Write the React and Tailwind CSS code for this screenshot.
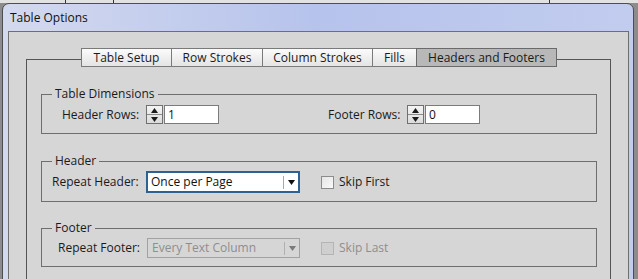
import React from 'react';

const font = { fontFamily: '"Open Sans", "Noto Sans", sans-serif' };

const tabs = [
  { label: 'Table Setup', w: 'w-[91px]' },
  { label: 'Row Strokes', w: 'w-[92px]' },
  { label: 'Column Strokes', w: 'w-[111px]' },
  { label: 'Fills', w: 'w-[45px]' },
  { label: 'Headers and Footers', w: 'w-[141px]', active: true },
];

const Spinner = () => (
  <div className="w-[17px] h-[19px] border border-[#707070] bg-gradient-to-b from-[#f4f4f4] to-[#dcdcdc] flex flex-col">
    <div className="flex-1 flex items-center justify-center border-b border-[#8a8a8a]">
      <svg width="7" height="5" viewBox="0 0 7 5"><path d="M0 5 L3.5 0 L7 5 Z" fill="#1a1a1a" /></svg>
    </div>
    <div className="flex-1 flex items-center justify-center">
      <svg width="7" height="5" viewBox="0 0 7 5"><path d="M0 0 L7 0 L3.5 5 Z" fill="#1a1a1a" /></svg>
    </div>
  </div>
);

const NumberField = ({ value }) => (
  <div className="flex items-center">
    <Spinner />
    <div className="ml-[1px] w-[55px] h-[19px] border border-[#7b7b7b] bg-white pl-[3px] flex items-center text-[12px] text-[#111]">
      {value}
    </div>
  </div>
);

const Dropdown = ({ value, disabled }) => (
  <div
    className={
      disabled
        ? 'w-[153px] h-[20px] border border-[#a2a2a2] bg-[#d6d6d6] flex items-center pl-[4px] text-[12px] text-[#8e8e8e]'
        : 'w-[154px] h-[22px] border-2 border-[#2f6190] bg-white flex items-center pl-[3px] text-[12px] text-[#111]'
    }
  >
    <span className="flex-1">{value}</span>
    <div className={disabled ? 'w-px h-[13px] bg-[#b0b0b0]' : 'w-px h-[13px] bg-[#a8a8a8]'} />
    <div className="w-[14px] flex items-center justify-center">
      <svg width="7" height="5" viewBox="0 0 7 5">
        <path d="M0 0 L7 0 L3.5 5 Z" fill={disabled ? '#7a7a7a' : '#111'} />
      </svg>
    </div>
  </div>
);

const Checkbox = ({ label, disabled }) => (
  <div className="flex items-center ml-[21px]">
    <div
      className={
        disabled
          ? 'w-[13px] h-[13px] border border-[#b4b4b4] bg-[#cfcfcf]'
          : 'w-[13px] h-[13px] border border-[#8c8c8c] bg-gradient-to-br from-[#e6e6e6] to-[#fafafa]'
      }
    />
    <span className={disabled ? 'ml-[5px] text-[12px] text-[#8e8e8e]' : 'ml-[5px] text-[12px] text-[#1a1a1a]'}>
      {label}
    </span>
  </div>
);

const Group = ({ title, className, children }) => (
  <fieldset className={`ml-[14px] mr-[13px] border border-[#6e6e6e] ${className}`}>
    <legend className="ml-[10px] px-[3px] leading-[16px] text-[12px] text-[#1a1a1a]">{title}</legend>
    {children}
  </fieldset>
);

export default function App() {
  return (
    <div className="w-[638px] h-[279px] overflow-hidden bg-[#8c8c8c] text-[#1a1a1a]" style={font}>
      <div className="h-[3px] bg-[#e2e2e2] flex">
        <div className="ml-[65px] w-px bg-[#333]" />
        <div className="ml-[47px] w-px bg-[#333]" />
        <div className="ml-[435px] w-px bg-[#333]" />
      </div>

      {/* window */}
      <div className="ml-[2px] w-[632px] border border-[#4e4e4e] rounded-t-[7px] bg-gradient-to-r from-[#d3d9ee] via-[#b6c3ec] to-[#c2ccef] pl-[5px] pr-[4px]">
        <div className="h-[27px] flex items-center pl-[2px] text-[12px] text-[#111]">Table Options</div>

        <div className="h-[260px] border border-[#6f6f6f] bg-[#d6d6d6] pt-[16px] px-[17px]">
          <fieldset className="border-t border-x border-[#555] h-[300px]">
            <legend className="ml-[54px] pb-[4px]">
              <div className="flex">
                {tabs.map((t, i) => (
                  <div
                    key={t.label}
                    className={
                      (i > 0 ? '-ml-px ' : '') +
                      t.w +
                      (t.active
                        ? ' h-[19px] border border-[#6a6a6a] bg-[#b8b8b8] flex items-center justify-center text-[12px] text-[#1a1a1a]'
                        : ' h-[19px] border border-[#7a7a7a] bg-gradient-to-b from-[#fbfbfb] to-[#e4e4e4] flex items-center justify-center text-[12px] text-[#1a1a1a]')
                    }
                  >
                    {t.label}
                  </div>
                ))}
              </div>
            </legend>

            <Group title="Table Dimensions" className="mt-[15px] pb-[9px]">
              <div className="mt-[3px] flex items-center h-[19px] text-[12px]">
                <span className="w-[104px] pl-[20px]">Header Rows:</span>
                <NumberField value="1" />
                <span className="ml-[109px] w-[79px]">Footer Rows:</span>
                <NumberField value="0" />
              </div>
            </Group>

            <Group title="Header" className="mt-[19px] pb-[8px]">
              <div className="mt-[2px] flex items-center h-[22px] text-[12px]">
                <span className="w-[104px] pl-[10px]">Repeat Header:</span>
                <Dropdown value="Once per Page" />
                <Checkbox label="Skip First" />
              </div>
            </Group>

            <Group title="Footer" className="mt-[18px] pb-[8px]">
              <div className="mt-[2px] flex items-center h-[20px] text-[12px]">
                <span className="w-[105px] pl-[16px]">Repeat Footer:</span>
                <Dropdown value="Every Text Column" disabled />
                <Checkbox label="Skip Last" disabled />
              </div>
            </Group>
          </fieldset>
        </div>
      </div>
    </div>
  );
}
